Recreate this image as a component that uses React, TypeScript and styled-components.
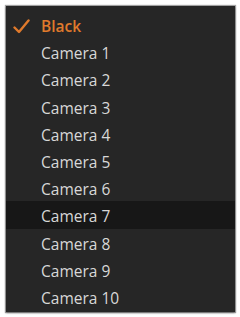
import React from "react";
import styled, { createGlobalStyle } from "styled-components";

const Global = createGlobalStyle`
  html, body { margin: 0; padding: 0; background: #ffffff; }
  body { width: 240px; height: 317px; overflow: hidden; }
`;

const Page = styled.div`
  padding: 6px 5px 5px 6px;
`;

const Menu = styled.ul`
  list-style: none;
  margin: 0;
  padding: 5px 0 0 0;
  width: 229px;
  height: 306px;
  box-sizing: border-box;
  background: #262626;
  box-shadow: 0 0 1px 1px rgba(0, 0, 0, 0.35), 0 1px 2px rgba(0, 0, 0, 0.4);
  display: flex;
  flex-direction: column;
  overflow: hidden;
`;

const Item = styled.li<{ $hover?: boolean; $selected?: boolean }>`
  height: 27.2px;
  flex: 0 0 27.2px;
  box-sizing: border-box;
  display: flex;
  align-items: center;
  padding: 3px 0 0 7px;
  background: ${(p) => (p.$hover ? "#171717" : "transparent")};
  color: ${(p) => (p.$selected ? "#e07a2c" : "#d8d8d8")};
  font-family: "Open Sans", "Liberation Sans", sans-serif;
  font-size: 15.5px;
  font-weight: ${(p) => (p.$selected ? 600 : 500)};
`;

const Check = styled.span`
  width: 28px;
  display: flex;
  align-items: center;
  justify-content: flex-start;
`;

const items = ["Black", ...Array.from({ length: 10 }, (_, i) => `Camera ${i + 1}`)];

export default function App() {
  return (
    <>
      <Global />
      <Page>
        <Menu>
          {items.map((label, i) => (
            <Item key={label} $selected={i === 0} $hover={i === 7}>
              <Check>
                {i === 0 && (
                  <svg width="17" height="15" viewBox="0 0 17 15">
                    <path d="M1.5 8.5 L6 13 L15.5 1.5" fill="none" stroke="#e07a2c" strokeWidth="2.4" strokeLinecap="round" strokeLinejoin="round" />
                  </svg>
                )}
              </Check>
              {label}
            </Item>
          ))}
        </Menu>
      </Page>
    </>
  );
}
